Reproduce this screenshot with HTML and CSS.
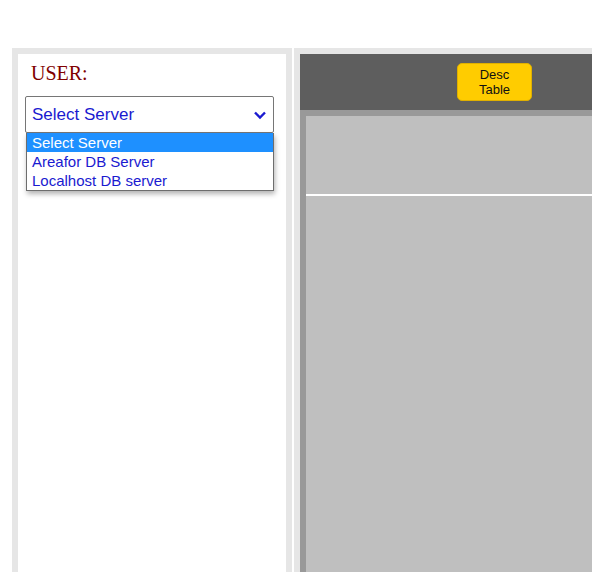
FILE: index.html
```html
<!DOCTYPE html>
<html>
<head>
<meta charset="utf-8">
<link rel="stylesheet" href="styles.css">
</head>
<body>
<div class="page">
  <aside class="side">
    <div class="user-label">USER:</div>
    <div class="select-wrap">
      <div class="select">
        <span>Select Server</span>
        <svg class="chev" width="14" height="10" viewBox="0 0 14 10"><path d="M2 2.5 L7 7.5 L12 2.5" fill="none" stroke="#1a1ad0" stroke-width="2.4"/></svg>
      </div>
      <ul class="options">
        <li class="opt active">Select Server</li>
        <li class="opt">Areafor DB Server</li>
        <li class="opt">Localhost DB server</li>
      </ul>
    </div>
  </aside>
  <main class="main">
    <div class="toolbar">
      <button class="btn">Desc<br>Table</button>
    </div>
    <div class="work">
      <div class="work-inner">
        <div class="top-area"></div>
        <div class="divider"></div>
      </div>
    </div>
  </main>
</div>
</body>
</html>
```
FILE: styles.css
```css
html, body {
  margin: 0;
  padding: 0;
  overflow: hidden;
  background: #fff;
}
.page {
  display: flex;
  gap: 2px;
  padding: 48px 0 0 12px;
  width: 800px;
}
.side {
  flex: 0 0 268px;
  height: 600px;
  border: 6px solid #e6e6e6;
  background: #fff;
  padding: 7px 12px 0 7px;
  box-sizing: content-box;
  width: 249px;
  flex-basis: auto;
}
.user-label {
  font-family: "Liberation Serif", serif;
  font-size: 20px;
  color: #800000;
  padding-left: 6px;
  line-height: 24px;
  height: 35px;
}
.select-wrap {
  position: relative;
}
.select {
  box-sizing: border-box;
  width: 249px;
  height: 37px;
  border: 1px solid #767676;
  border-radius: 2px;
  display: flex;
  align-items: center;
  justify-content: space-between;
  padding: 0 5px 0 6px;
  font-family: "Liberation Sans", Arial, sans-serif;
  font-size: 17px;
  color: #1a1ad0;
}
.chev {
  margin-right: 1px;
}
.options {
  position: absolute;
  top: 37px;
  left: 1px;
  width: 248px;
  box-sizing: border-box;
  margin: 0;
  padding: 0;
  list-style: none;
  border: 1px solid #6d6d6d;
  border-top: none;
  background: #fff;
  box-shadow: 1px 3px 5px rgba(0,0,0,0.3);
  font-family: "Liberation Sans", Arial, sans-serif;
  font-size: 15px;
  color: #1a1ad0;
}
.opt {
  height: 19px;
  line-height: 19px;
  padding-left: 5px;
}
.opt.active {
  background: #1e90ff;
  color: #fff;
}
.main {
  width: 500px;
  height: 600px;
  border: 6px solid #e6e6e6;
  border-right: none;
  display: flex;
  flex-direction: column;
}
.toolbar {
  height: 56px;
  background: #5e5e5e;
  padding: 9px 0 0 157px;
  box-sizing: border-box;
}
.btn {
  width: 75px;
  height: 38px;
  background: #ffcc00;
  border: 1px solid #e0b000;
  border-radius: 5px;
  font-family: "Liberation Sans", Arial, sans-serif;
  font-size: 13px;
  line-height: 15px;
  color: #111;
  padding: 0;
}
.work {
  flex: 1;
  background: #999999;
  padding: 6px 0 0 6px;
}
.work-inner {
  background: #bfbfbf;
  height: 100%;
}
.top-area {
  height: 78px;
}
.divider {
  height: 2px;
  background: #fff;
}
```
